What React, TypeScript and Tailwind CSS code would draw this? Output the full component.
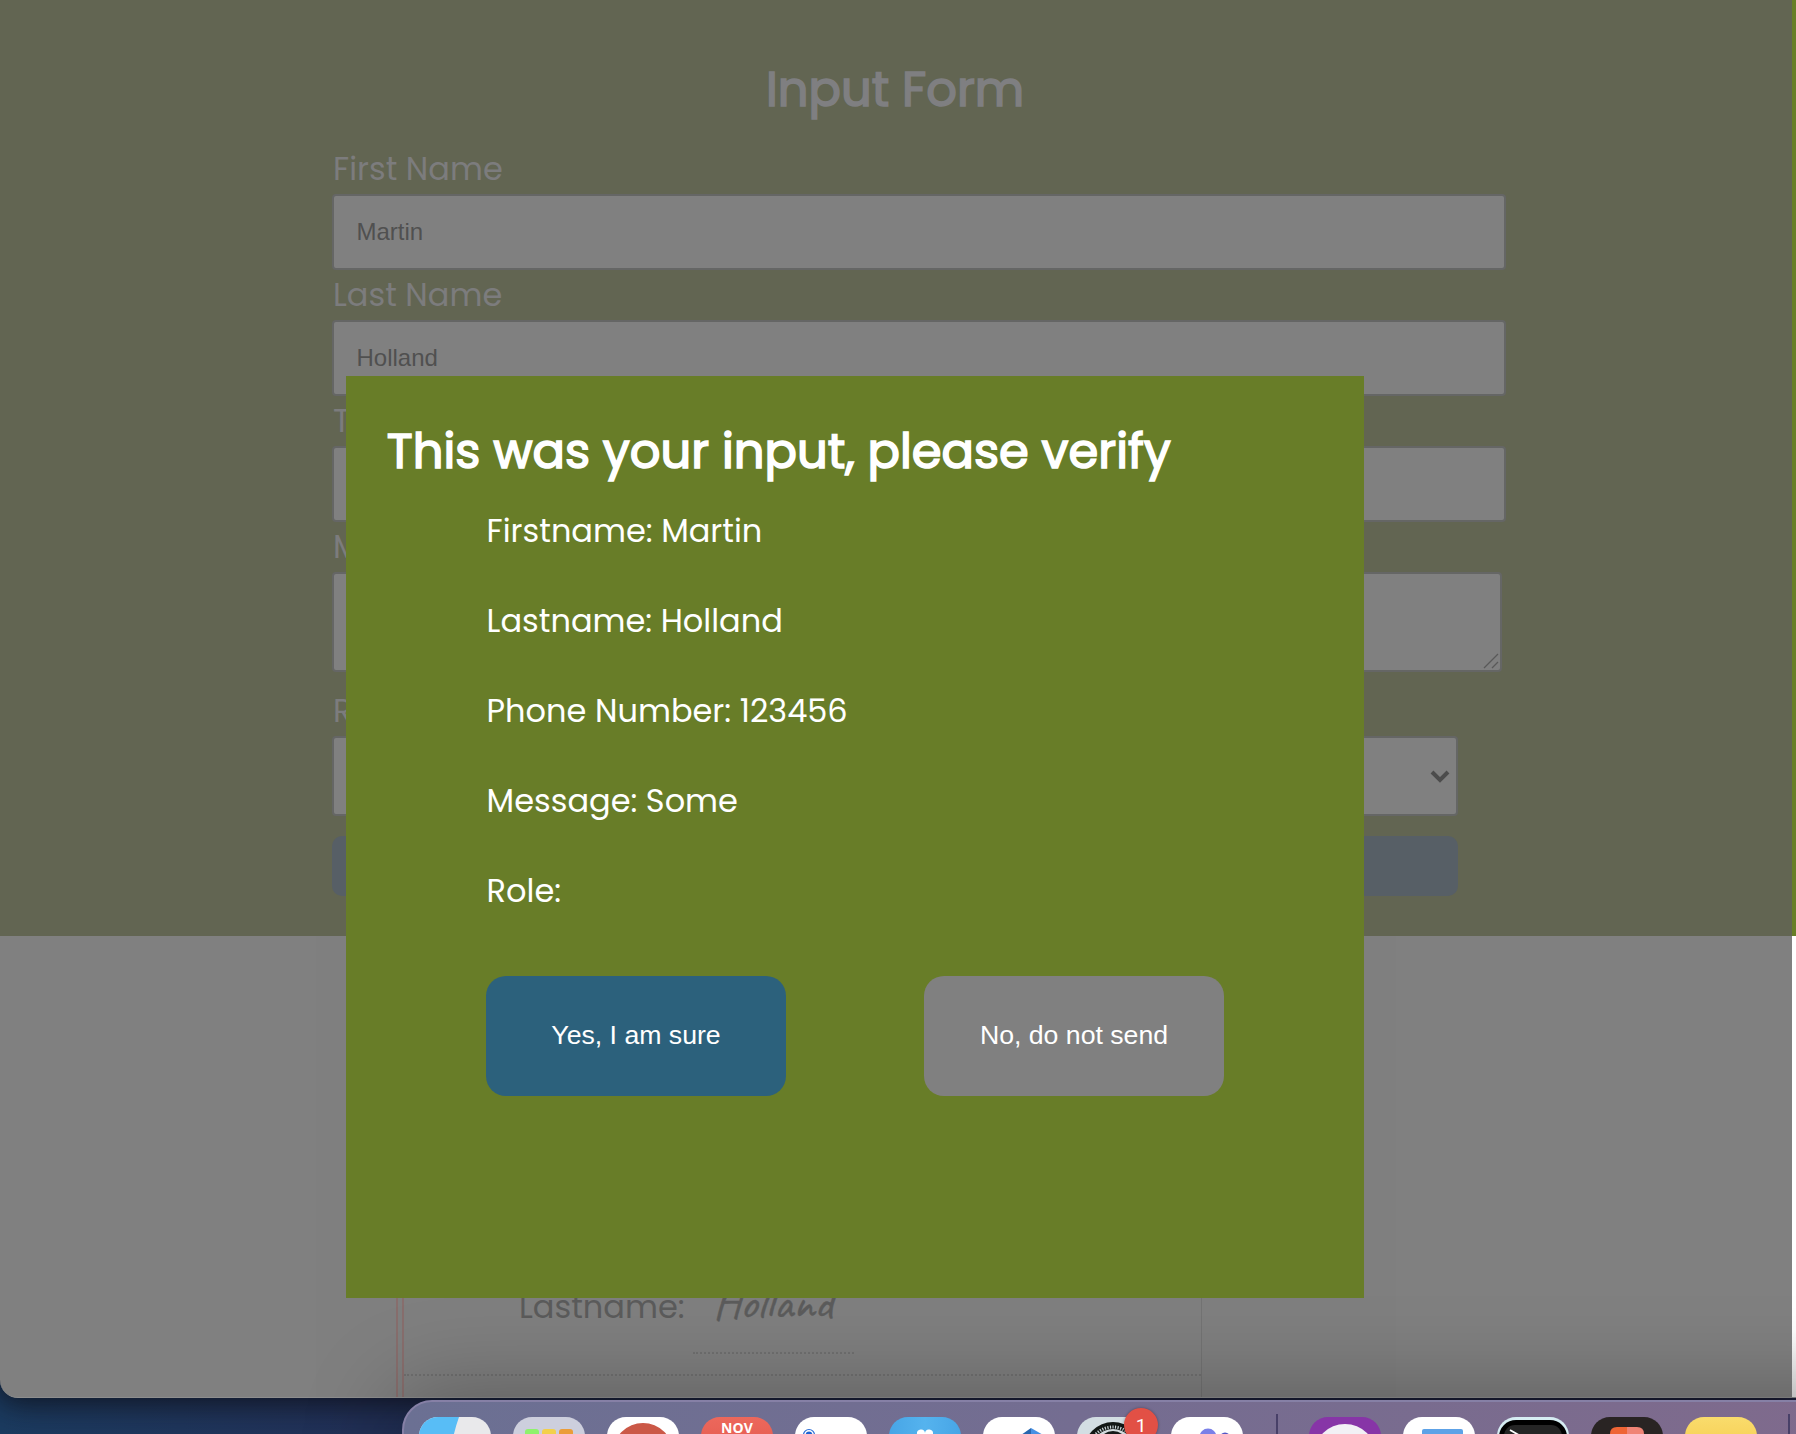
import type { ReactNode } from "react";

const geo = "font-['Poppins',sans-serif]";

function Label({ children, className = "" }: { children: ReactNode; className?: string }) {
  return (
    <div className={`h-12 text-[32px] leading-[48px] whitespace-nowrap text-[#7c7c7d] ${geo} ${className}`}>
      {children}
    </div>
  );
}

function Field({ value }: { value: string }) {
  return (
    <div className="flex h-[76px] w-[1174px] items-center rounded-[4px] border-2 border-[#656665] bg-[#808080] pl-[22.5px] font-['Liberation_Sans',Arial,sans-serif] text-2xl text-[#505050]">
      {value}
    </div>
  );
}

const rows = ["Firstname: Martin", "Lastname: Holland", "Phone Number: 123456", "Message: Some", "Role:"];

function Tile({ className, children }: { className: string; children?: ReactNode }) {
  return (
    <div className={`relative h-[72px] w-[72px] shrink-0 rounded-[19px] ${className}`}>
      <svg viewBox="0 0 72 72" className="block h-[72px] w-[72px] overflow-hidden rounded-[19px]">
        {children}
      </svg>
    </div>
  );
}

function Dock() {
  return (
    <div className="absolute top-[1400px] left-[402px] flex h-[108px] w-[1500px] gap-[22px] rounded-[30px] border-2 border-[#8680a6] bg-gradient-to-r from-[#6b7093] via-[#746d91] via-45% to-[#806a8c] pt-[15px] pl-[15px] shadow-[0_0_90px_10px_rgba(0,0,0,0.27)]">
      <Tile className="bg-[#e9e9eb]">
        <path d="M0 0H40C35 14 32 28 31 44H0Z" fill="#58bdf6" />
      </Tile>
      <Tile className="bg-[#cdcfdd]">
        <rect x="12" y="12" width="14" height="14" rx="3" fill="#8ef26c" />
        <rect x="29" y="12" width="14" height="14" rx="3" fill="#f3d04b" />
        <rect x="46" y="12" width="14" height="14" rx="3" fill="#eb9d39" />
      </Tile>
      <Tile className="bg-white">
        <circle cx="36" cy="36" r="30" fill="#cb5847" />
      </Tile>
      <div className="relative h-[72px] w-[72px] shrink-0 rounded-[19px] bg-gradient-to-b from-[#ec685c] to-[#dd4b3f] pt-[3px] text-center font-['Open_Sans',sans-serif] text-[14px] leading-[16px] font-bold tracking-[0.2px] text-white">
        NOV
      </div>
      <Tile className="bg-white">
        <circle cx="14" cy="18" r="5.5" fill="none" stroke="#2d6fd6" strokeWidth="1.2" />
        <circle cx="14" cy="18" r="3.4" fill="#1d63d3" />
        <path d="M23 17.5H62" stroke="#ededed" />
      </Tile>
      <Tile className="bg-gradient-to-r from-[#47a5e6] via-[#55b3ee] to-[#47a5e6]">
        <path d="M28 17a4 4 0 0 1 8-1 4 4 0 0 1 8 1q0 3-3 6H31q-3-3-3-6Z" fill="white" />
      </Tile>
      <Tile className="bg-white">
        <path d="M38 18 48 11V28H38Z" fill="#2866ae" />
        <path d="M48 11 62 19V28H48Z" fill="#4690e4" />
      </Tile>
      <div className="relative h-[72px] w-[72px] shrink-0">
        <Tile className="bg-[#d3dee3]">
          <circle cx="36" cy="34" r="29" fill="#121715" />
          <circle cx="36" cy="34" r="24" fill="none" stroke="#cbd5d8" strokeWidth="3" strokeDasharray="1.2 1.4" />
          <circle cx="36" cy="34" r="22" fill="#d2dadd" />
          <circle cx="36" cy="29" r="15" fill="#151918" />
        </Tile>
        <div className="absolute -top-[9px] left-[47px] h-[34px] w-[34px] rounded-full bg-[#e25045] text-center font-['Roboto',sans-serif] text-[19px] leading-[35px] text-white shadow-[0_0_3px_rgba(0,0,0,0.35)]">
          1
        </div>
      </div>
      <Tile className="bg-white">
        <circle cx="37" cy="20" r="8.5" fill="#7a80e8" />
        <circle cx="54" cy="21" r="5.5" fill="#5157c5" />
      </Tile>
      <div className="mr-[9px] ml-[11px] -mt-[3px] h-20 w-[2px] shrink-0 bg-[#484068]" />
      <Tile className="bg-[#8735a7]">
        <circle cx="36" cy="38" r="31" fill="#f2f0f5" />
      </Tile>
      <Tile className="bg-white">
        <rect x="19" y="12" width="41" height="30" rx="2" fill="#5da2e7" />
      </Tile>
      <Tile className="bg-[#d6edf3]">
        <rect x="2" y="3" width="68" height="66" rx="17" fill="#000" />
        <rect x="7" y="8" width="58" height="57" rx="11" fill="#252525" />
        <path d="m13 13 7 4-7 4" fill="none" stroke="white" strokeWidth="1.8" />
      </Tile>
      <Tile className="bg-[#292423]">
        <path d="M19 30V17Q19 10 26 10H36V30Z" fill="#ef6536" />
        <path d="M36 10H46Q53 10 53 17V30H36Z" fill="#f08476" />
      </Tile>
      <Tile className="bg-gradient-to-b from-[#f9dc6c] to-[#f3bd23]" />
      <div className="ml-[9px] -mt-[3px] h-20 w-[2px] shrink-0 bg-[#484068]" />
    </div>
  );
}

function FormPage() {
  return (
    <section className="h-[936px] bg-[#626552] pt-[60px] pl-[332px]">
      <h1 className={`ml-[434px] h-[64px] w-[260px] text-[48px] leading-[60px] font-normal whitespace-nowrap text-[#7f7f81] [-webkit-text-stroke:1.6px_#7f7f81] ${geo}`}>
        Input Form
      </h1>
      <Label className="mt-[21px] pl-px">First Name</Label>
      <div className="mt-[1px]"><Field value="Martin" /></div>
      <Label className="mt-[1px] pl-px">Last Name</Label>
      <div className="mt-[1px]"><Field value="Holland" /></div>
      <Label className="mt-[1px] pl-px">T</Label>
      <div className="mt-[1px]"><Field value="" /></div>
      <Label className="mt-[1px] pl-px">M</Label>
      <div className="relative mt-[1px] h-[100px] w-[1170px] rounded-[4px] border-2 border-[#656665] bg-[#808080]">
        <svg viewBox="0 0 16 16" className="absolute right-[1px] bottom-[1px] h-4 w-4">
          <path d="M1 15 15 1M9 15l6-6" stroke="#595959" strokeWidth="1.3" />
        </svg>
      </div>
      <Label className="mt-[15px] pl-px">R</Label>
      <div className="mt-[1px] flex h-20 w-[1126px] items-center justify-end rounded-[4px] border-2 border-[#656665] bg-[#808080] pr-[6px]">
        <svg viewBox="0 0 20 14" className="mt-[2px] h-[14px] w-5">
          <path d="m2 2 8 8 8-8" fill="none" stroke="#4c4c4c" strokeWidth="4" />
        </svg>
      </div>
      <div className="mt-5 h-[60px] w-[1126px] rounded-[10px] bg-[#575f66]" />
    </section>
  );
}

export default function App() {
  return (
    <div className="relative h-[1434px] w-[1796px] overflow-hidden bg-gradient-to-r from-[#1b3b60] via-[#223158] via-20% to-[#25294e]">
      <div className="flex h-[1398px] overflow-hidden rounded-bl-[18px] border-b border-[#8e8e8e] bg-[#808080] shadow-[0_2px_30px_4px_rgba(12,12,20,0.8)]">
        <main className="w-[1792px]">
          <FormPage />
          <section className="ml-[316px] h-[461px] w-[1080px] bg-[#7f7f7f]">
            <div className="ml-20 flex h-[461px] w-[806px] border-r border-[#737373]">
              <div className="w-2 shrink-0 border-x-2 border-[#876e6d]" />
              <div className="w-full pt-[348px]">
                <div className={`flex h-[92px] border-b-2 border-dotted border-[#707070] pl-[115px] text-[#5b5b5b] ${geo}`}>
                  <span className="w-[174px] text-[32px] leading-[46px]">Lastname:</span>
                  <span className="h-[70px] w-[161px] border-b-2 border-dotted border-[#707070] pl-5 font-['Caveat',cursive] text-[48px] leading-[36px] font-medium [-webkit-text-stroke:0.4px_#5b5b5b]">
                    Holland
                  </span>
                </div>
              </div>
            </div>
          </section>
        </main>
        <div className="w-1">
          <div className="h-[936px] bg-[#687e27]" />
          <div className="h-[462px] bg-gradient-to-b from-white via-white via-85% to-[#e4e4e4]" />
        </div>
      </div>

      <Dock />

      <div className="absolute top-[376px] left-[346px] h-[922px] w-[1018px] bg-[#687d28] pt-[46px] pl-10 text-white">
        <h2 className={`h-[60px] pl-[0.8px] text-[48px] leading-[60px] font-normal whitespace-nowrap [-webkit-text-stroke:1.6px_white] ${geo}`}>
          This was your input, please verify
        </h2>
        <div className={`mt-[4px] ml-[100.6px] ${geo}`}>
          {rows.map((row) => (
            <p key={row} className="h-[90px] text-[32px] leading-[90px] whitespace-nowrap">
              {row}
            </p>
          ))}
        </div>
        <div className="mt-10 ml-[100px] flex gap-[138px] font-['Liberation_Sans',Arial,sans-serif] text-[26.67px]">
          <button className="h-[120px] w-[300px] rounded-[20px] bg-[#2c617c] pb-[3px]">Yes, I am sure</button>
          <button className="h-[120px] w-[300px] rounded-[20px] bg-[#808080] pb-[3px]">No, do not send</button>
        </div>
      </div>
    </div>
  );
}
